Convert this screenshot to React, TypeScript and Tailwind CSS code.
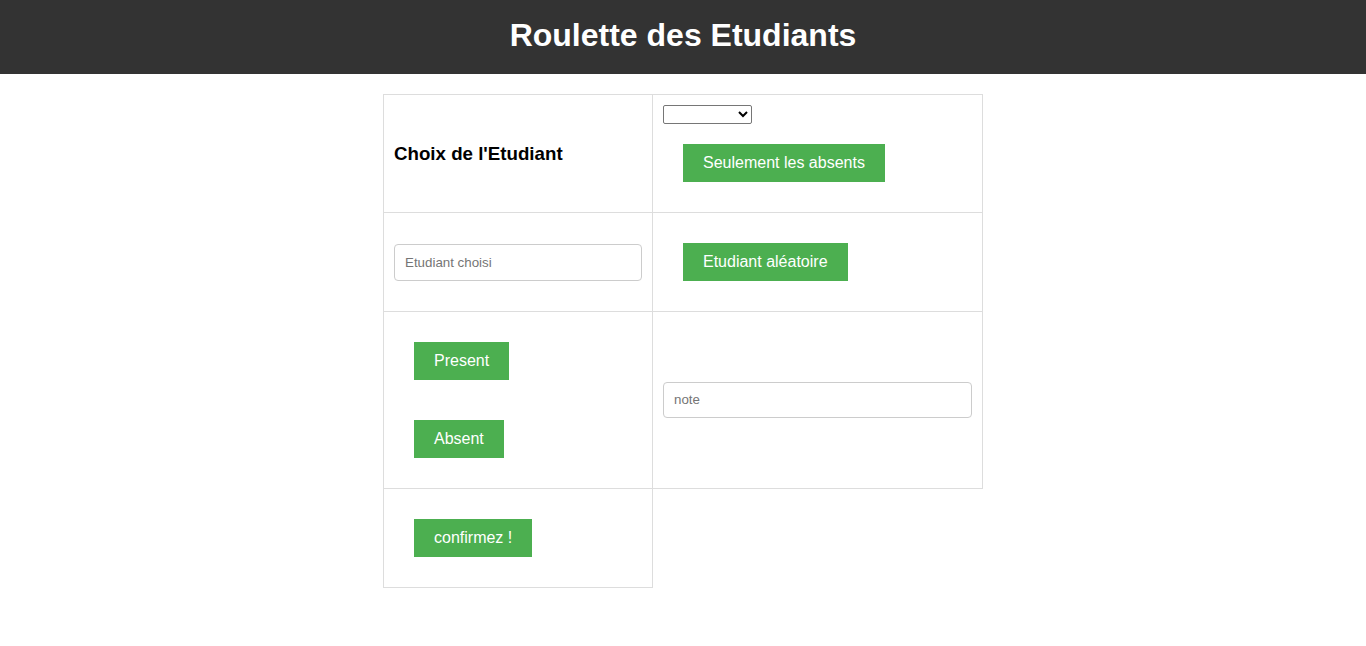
export default function App() {
  const btn =
    "inline-block m-5 px-5 py-[10px] bg-[#4CAF50] text-white text-base leading-[18px] cursor-pointer";

  return (
    <div className="min-h-screen bg-white text-black font-['Liberation_Sans',Arial,sans-serif]">
      {/* Header */}
      <header className="h-[74px] pb-1 bg-[#333333] flex items-center justify-center">
        <h1 className="text-[32px] font-bold text-white leading-[37px]">Roulette des Etudiants</h1>
      </header>

      {/* Table */}
      <table className="mx-auto mt-5 w-[599px] table-fixed border-collapse">
        <colgroup>
          <col className="w-[269px]" />
          <col className="w-[330px]" />
        </colgroup>
        <tbody>
          <tr>
            <td className="border border-[#dddddd] p-[10px] align-middle">
              <h3 className="text-[18.72px] font-bold leading-[22px]">Choix de l'Etudiant</h3>
            </td>
            <td className="border border-[#dddddd] p-[10px] align-middle">
              <div>
                <select className="block w-[89px] h-[19px] border border-[#767676] rounded-[2px] bg-white text-[13.33px]">
                  <option value=""></option>
                </select>
              </div>
              <button className={btn}>Seulement les absents</button>
            </td>
          </tr>
          <tr>
            <td className="border border-[#dddddd] p-[10px] align-middle">
              <input
                type="text"
                placeholder="Etudiant choisi"
                className="block w-full px-[10px] py-[10px] border border-[#cccccc] rounded-[4px] text-[13.33px] leading-[15px] placeholder:text-[#757575]"
              />
            </td>
            <td className="border border-[#dddddd] p-[10px] align-middle">
              <button className={btn}>Etudiant aléatoire</button>
            </td>
          </tr>
          <tr>
            <td className="border border-[#dddddd] p-[10px] align-middle">
              <div>
                <button className={btn}>Present</button>
              </div>
              <div>
                <button className={btn}>Absent</button>
              </div>
            </td>
            <td className="border border-[#dddddd] p-[10px] align-middle">
              <input
                type="text"
                placeholder="note"
                className="block w-full px-[10px] py-[10px] border border-[#cccccc] rounded-[4px] text-[13.33px] leading-[14px] placeholder:text-[#757575]"
              />
            </td>
          </tr>
          <tr>
            <td className="border border-[#dddddd] p-[10px] align-middle">
              <button className={btn}>confirmez !</button>
            </td>
          </tr>
        </tbody>
      </table>
    </div>
  );
}
